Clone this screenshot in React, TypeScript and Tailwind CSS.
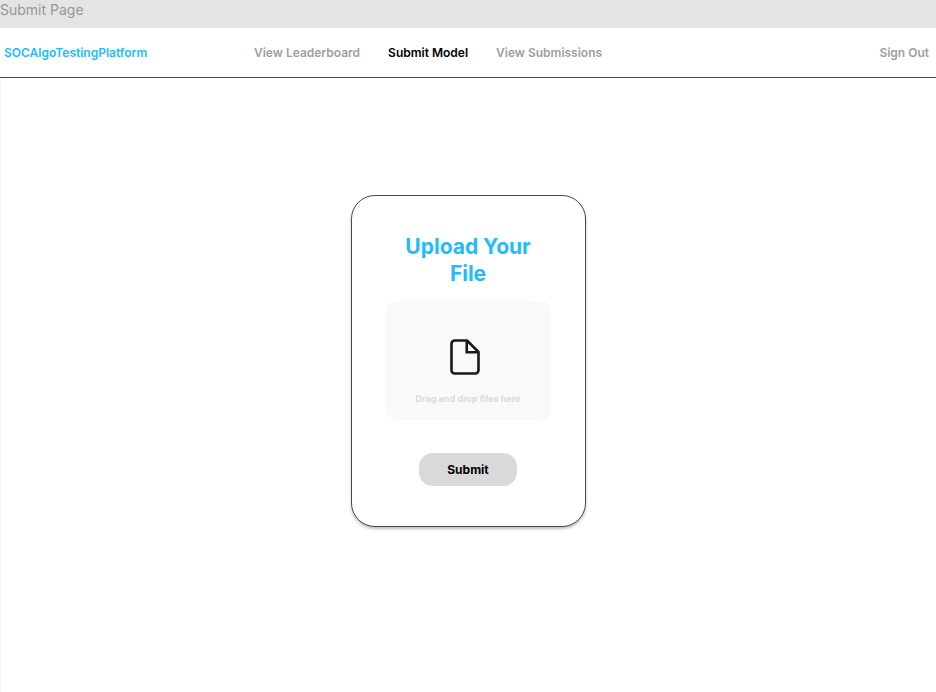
import React, { useState } from "react";

const links = ["View Leaderboard", "Submit Model", "View Submissions"];

function FileIcon() {
  return (
    <svg
      aria-hidden="true"
      className="mr-1.5 h-9 w-[30px]"
      viewBox="0 0 30 36"
      fill="none"
      stroke="#18191b"
      strokeWidth="2.6"
      strokeLinejoin="round"
    >
      <path d="M4.5 1.5H17L28.5 13v18.3a3.2 3.2 0 0 1-3.2 3.2H4.7a3.2 3.2 0 0 1-3.2-3.2V4.7a3.2 3.2 0 0 1 3.2-3.2Z" />
      <path d="M16.75 1.75V13.25H28.25" strokeLinejoin="miter" />
    </svg>
  );
}

function NavBar() {
  return (
    <header className="flex h-[50px] items-center justify-between border-b border-[#4a4a4a] pr-[7px] pl-1 text-[12px] leading-4 font-semibold">
      <div className="flex items-center">
        <a href="#home" className="w-[250px] text-[#22bbff]">
          SOCAlgoTestingPlatform
        </a>
        <nav className="flex gap-7">
          {links.map((link) => (
            <a
              key={link}
              href="#page"
              className={link === "Submit Model" ? "text-black" : "text-[#9ca0a6]"}
            >
              {link}
            </a>
          ))}
        </nav>
      </div>
      <a href="#signout" className="text-[#9ca0a6]">
        Sign Out
      </a>
    </header>
  );
}

function UploadCard() {
  const [fileName, setFileName] = useState("");
  return (
    <form
      onSubmit={(event) => event.preventDefault()}
      className="flex w-[235px] flex-col items-center rounded-3xl border border-[#4a4a4a] bg-white px-[34px] pt-[37px] pb-10 shadow-[0_2px_3px_rgba(0,0,0,0.25)]"
    >
      <h1 className="px-4 text-center text-[21px] leading-[27px] font-bold text-[#22bbff]">
        Upload Your File
      </h1>
      <label
        htmlFor="model-file"
        className="mt-3.5 flex h-[119px] w-full cursor-pointer flex-col items-center rounded-[10px] bg-[#f8f9fb] pt-[38px]"
      >
        <FileIcon />
        <span className="mt-[18px] text-[9px] leading-3 font-bold text-[#dadbdc]">
          {fileName || "Drag and drop files here"}
        </span>
        <input
          id="model-file"
          type="file"
          className="sr-only"
          onChange={(event) => setFileName(event.target.files?.[0]?.name ?? "")}
        />
      </label>
      <button
        type="submit"
        className="mt-[33px] h-[33px] w-[98px] rounded-[14px] bg-[#d9d9d9] text-[12px] leading-4 font-bold text-black"
      >
        Submit
      </button>
    </form>
  );
}

export default function App() {
  return (
    <div className="flex min-h-screen flex-col bg-[#e4e4e4] font-['Inter',sans-serif]">
      <p className="h-7 text-[14px] leading-5 text-[#979797]">Submit Page</p>
      <div className="flex grow flex-col bg-white">
        <NavBar />
        <main className="flex grow items-start justify-center border-l border-[#f3f3f3] pt-[117px] pr-px pb-10">
          <UploadCard />
        </main>
      </div>
    </div>
  );
}
